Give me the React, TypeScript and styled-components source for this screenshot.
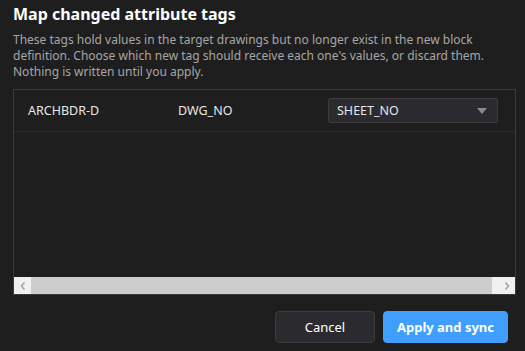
import styled, { createGlobalStyle } from 'styled-components';

const GlobalStyle = createGlobalStyle`
  html, body {
    margin: 0;
    background: #1e1e1e;
  }
  body {
    font-family: "Noto Sans", "Open Sans", sans-serif;
  }
`;

function Chevron({ dir }: { dir: 'left' | 'right' }) {
  return (
    <svg width="8" height="10" viewBox="0 0 8 10">
      <path
        d={dir === 'left' ? 'M5.5 1.5 L2.5 5 L5.5 8.5' : 'M2.5 1.5 L5.5 5 L2.5 8.5'}
        fill="none"
        stroke="#a3a3a3"
        strokeWidth="1.5"
      />
    </svg>
  );
}

function App() {
  return (
    <Dialog>
      <GlobalStyle />
      <Title>Map changed attribute tags</Title>
      <Description>
        These tags hold values in the target drawings but no longer exist in the new block
        definition. Choose which new tag should receive each one's values, or discard them.
        Nothing is written until you apply.
      </Description>
      <Table>
        <Body>
          <Row>
            <Cell>ARCHBDR-D</Cell>
            <Cell>DWG_NO</Cell>
            <Select>
              <span>SHEET_NO</span>
              <Caret />
            </Select>
          </Row>
        </Body>
        <ScrollBar>
          <ScrollButton>
            <Chevron dir="left" />
          </ScrollButton>
          <Thumb />
          <ScrollButton>
            <Chevron dir="right" />
          </ScrollButton>
        </ScrollBar>
      </Table>
      <Footer>
        <Button>Cancel</Button>
        <Button $primary>Apply and sync</Button>
      </Footer>
    </Dialog>
  );
}

export default App;

const Dialog = styled.div`
  width: 525px;
  height: 351px;
  box-sizing: border-box;
  padding: 2px 9px 0 13px;
  display: flex;
  flex-direction: column;
`;

const Title = styled.h1`
  margin: 0;
  font-size: 16px;
  font-weight: 700;
  line-height: 24px;
  color: #ffffff;
`;

const Description = styled.p`
  margin: 6px 0 0;
  font-size: 12px;
  line-height: 16px;
  color: #a6a6a6;
`;

const Table = styled.div`
  margin-top: 9px;
  height: 206px;
  border: 1px solid #3a3a3a;
  display: flex;
  flex-direction: column;
  box-sizing: border-box;
`;

const Body = styled.div`
  flex: 1;
`;

const Row = styled.div`
  height: 41px;
  border-bottom: 1px solid #2e2e2e;
  display: grid;
  grid-template-columns: 150px 150px 170px;
  align-items: center;
  padding-left: 14px;
`;

const Cell = styled.div`
  font-size: 12.5px;
  color: #e6e6e6;
`;

const Select = styled.div`
  height: 25px;
  box-sizing: border-box;
  border: 1px solid #3c3c3c;
  border-radius: 2px;
  background: #2b2b2f;
  display: flex;
  align-items: center;
  justify-content: space-between;
  padding: 0 10px 0 8px;
  font-size: 12.5px;
  color: #e6e6e6;
`;

const Caret = styled.span`
  width: 0;
  height: 0;
  border-left: 5px solid transparent;
  border-right: 5px solid transparent;
  border-top: 6px solid #8a8a8a;
`;

const ScrollBar = styled.div`
  height: 17px;
  display: flex;
  background: #f0f0f0;
`;

const ScrollButton = styled.div`
  width: 17px;
  display: flex;
  align-items: center;
  justify-content: center;
`;

const Thumb = styled.div`
  flex: 1;
  background: #cdcdcd;
  margin-right: 6px;
`;

const Footer = styled.div`
  margin-top: 16px;
  display: flex;
  justify-content: flex-end;
  gap: 8px;
  padding-right: 8px;
`;

const Button = styled.button<{ $primary?: boolean }>`
  height: 32px;
  padding: 0;
  width: ${(p) => (p.$primary ? '125px' : '100px')};
  border-radius: 4px;
  border: 1px solid ${(p) => (p.$primary ? '#409eff' : '#3c3c40')};
  background: ${(p) => (p.$primary ? '#409eff' : '#2b2b2f')};
  color: #ffffff;
  font-family: inherit;
  font-size: 13px;
  font-weight: ${(p) => (p.$primary ? 700 : 400)};
`;
